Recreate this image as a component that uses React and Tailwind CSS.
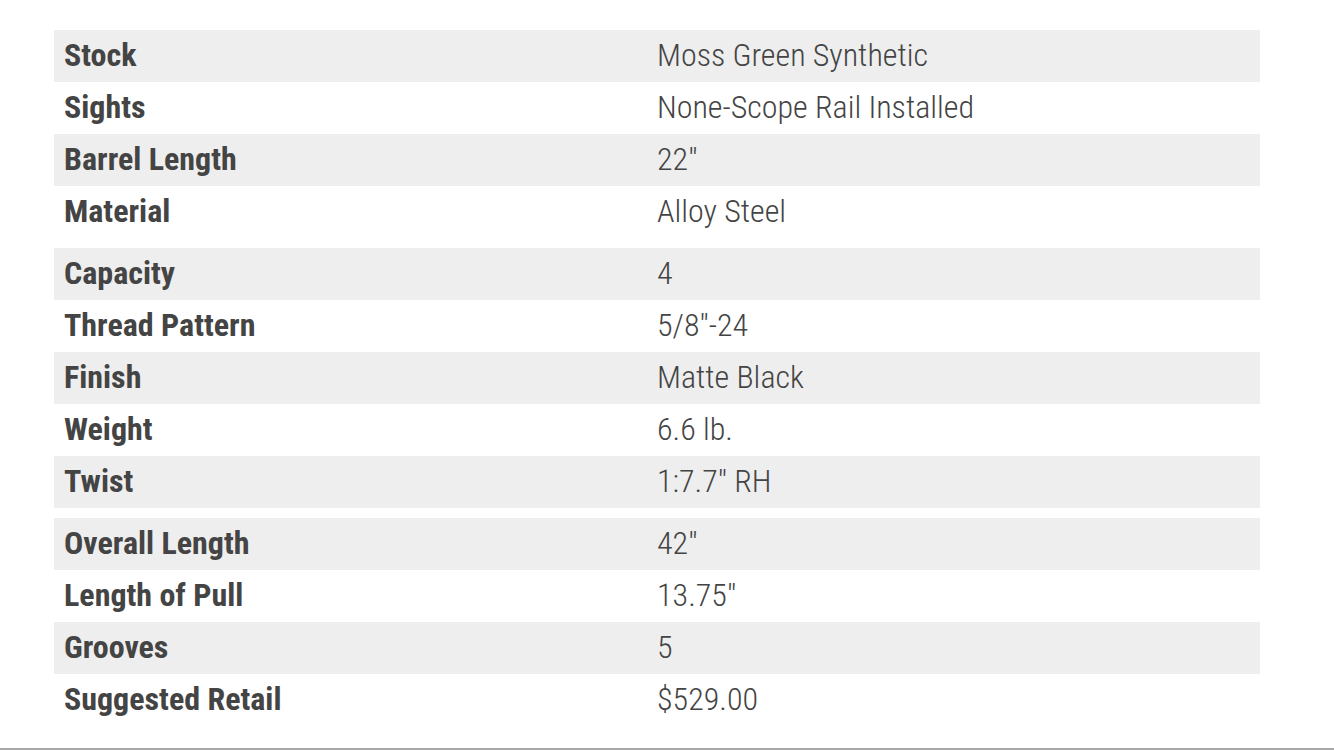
import React from "react";

const specGroups = [
  [
    ["Stock", "Moss Green Synthetic"],
    ["Sights", "None-Scope Rail Installed"],
    ["Barrel Length", "22\""],
    ["Material", "Alloy Steel"],
  ],
  [
    ["Capacity", "4"],
    ["Thread Pattern", "5/8\"-24"],
    ["Finish", "Matte Black"],
    ["Weight", "6.6 lb."],
    ["Twist", "1:7.7\" RH"],
  ],
  [
    ["Overall Length", "42\""],
    ["Length of Pull", "13.75\""],
    ["Grooves", "5"],
    ["Suggested Retail", "$529.00"],
  ],
];

const SpecTable = ({ rows }) => (
  <table className="w-full table-fixed border-collapse mb-[10px]">
    <tbody>
      {rows.map(([label, value], i) => (
        <tr key={label} className={i % 2 === 0 ? "bg-[#eeeeee]" : "bg-white"}>
          <td className="w-[593px] h-[52px] pl-[10px] pb-[2px] text-[32px] font-bold text-[#444444] leading-none">
            {label}
          </td>
          <td className="h-[52px] pl-[10px] pb-[2px] text-[32px] font-light text-[#444444] leading-none">
            {value}
          </td>
        </tr>
      ))}
    </tbody>
  </table>
);

const App = () => {
  return (
    <div
      className="bg-white min-h-[750px]"
      style={{ fontFamily: '"Roboto Condensed", "Liberation Sans Narrow", Roboto, sans-serif' }}
    >
      <div className="pt-[30px] pl-[54px] w-[1260px]">
        {specGroups.map((rows, i) => (
          <SpecTable key={i} rows={rows} />
        ))}
      </div>
      <div className="mt-[22px] border-t-2 border-[#a8a8a8]"></div>
    </div>
  );
};

export default App;
